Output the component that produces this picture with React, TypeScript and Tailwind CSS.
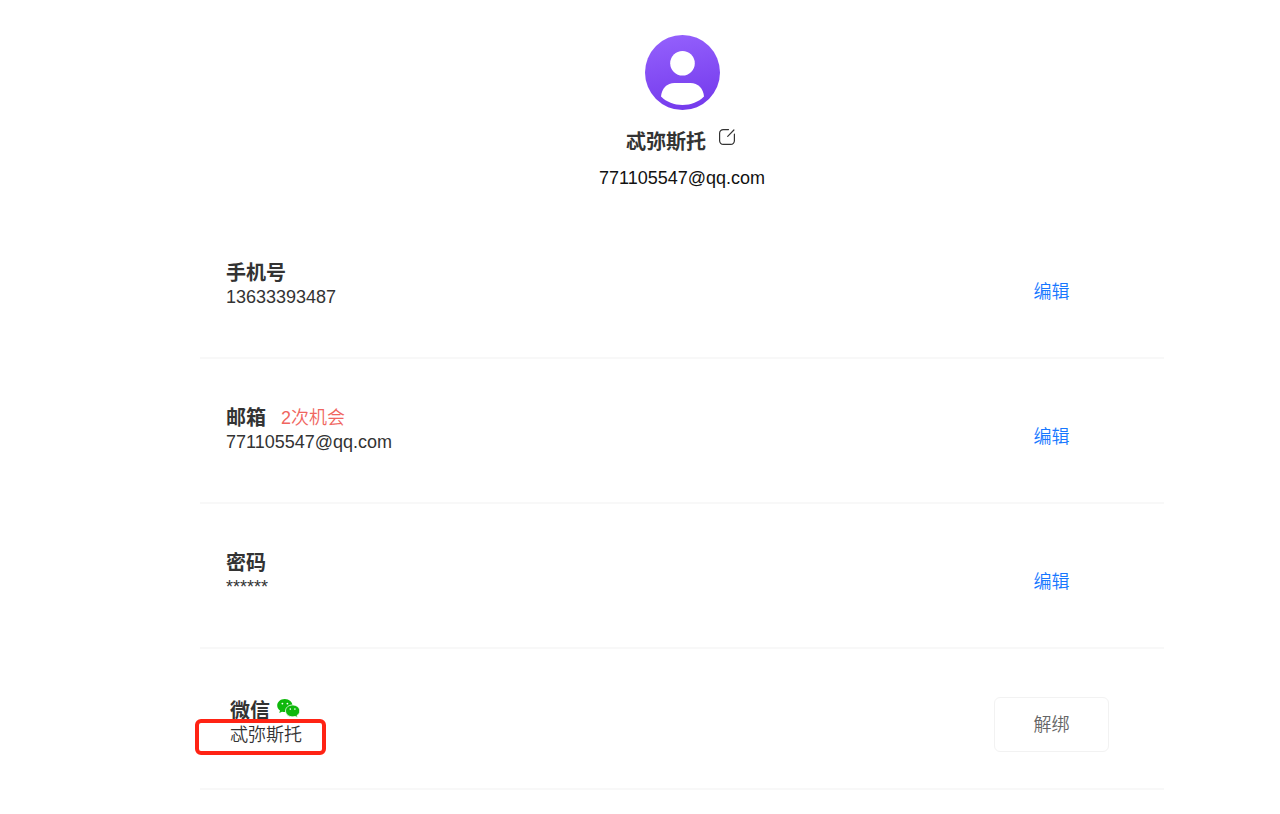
import type { ReactNode } from "react";

const accounts = [
  { label: "手机号", value: "13633393487" },
  { label: "邮箱", value: "771105547@qq.com", note: "2次机会" },
  { label: "密码", value: "******" },
];

function Avatar() {
  return (
    <svg viewBox="0 0 75 75" className="size-[75px]" role="img" aria-label="头像">
      <defs>
        <linearGradient id="avatar-fill" x1="0.4" y1="0" x2="0.6" y2="1">
          <stop offset="0" stopColor="#935ffc" />
          <stop offset="1" stopColor="#743aec" />
        </linearGradient>
      </defs>
      <circle cx="37.5" cy="37.5" r="37.5" fill="url(#avatar-fill)" />
      <circle cx="37.5" cy="28.2" r="12.3" fill="#fff" />
      <path
        d="M29.5 48h16c7.5 0 13 5.8 13.5 13.5C53.5 67 46 70 37.5 70S21.5 67 16 61.5C16.5 53.8 22 48 29.5 48Z"
        fill="#fff"
      />
    </svg>
  );
}

function EditIcon() {
  return (
    <svg viewBox="0 0 20 20" className="size-5" fill="none" stroke="#333" strokeWidth="1.2" strokeLinecap="round">
      <path d="M10.5 2.600H5.200A3.600 3.600 0 0 0 1.600 6.200v7.600a3.600 3.600 0 0 0 3.600 3.600h7.600a3.600 3.600 0 0 0 3.600-3.600V7.200" />
      <path d="M9.700 9.400 15.900 3" />
    </svg>
  );
}

function WechatIcon() {
  return (
    <svg viewBox="0 0 24 20" className="h-5 w-6">
      <path
        d="M8.800 0C4.400 0 1.200 2.900 1.200 6.600c0 2.100 1 3.800 2.800 5L3.300 14l2.700-1.300c.9.200 1.800.4 2.800.4 4.400 0 7.700-2.900 7.700-6.500S13.200 0 8.800 0Z"
        fill="#0fb80c"
      />
      <path
        d="M16.600 6c-4 0-7.100 2.600-7.100 5.900s3.100 5.900 7.100 5.900c.9 0 1.800-.2 2.600-.4l2.400 1.200-.6-2c1.600-1.100 2.700-2.700 2.700-4.700 0-3.300-3.200-5.900-7.100-5.900Z"
        fill="#0fb80c"
        stroke="#fff"
        strokeWidth="0.8"
      />
      <g fill="#fff">
        <circle cx="6.400" cy="4.600" r="0.900" />
        <circle cx="11.400" cy="4.600" r="0.900" />
        <circle cx="14.300" cy="10.100" r="0.800" />
        <circle cx="18.900" cy="10.100" r="0.800" />
      </g>
    </svg>
  );
}

function Row({ children, action }: { children: ReactNode; action: ReactNode }) {
  return (
    <li className="flex items-start justify-between border-b-2 border-[#f8f8f8] pr-[55px] pl-[26px]">
      {children}
      <div className="flex w-[115px] justify-center">{action}</div>
    </li>
  );
}

export default function App() {
  return (
    <main className="mr-[116px] ml-[200px] pt-[35px] pb-6 font-['Liberation_Sans','Noto_Sans_CJK_SC',sans-serif] text-lg leading-6 text-[#333]">
      <header className="flex flex-col items-center">
        <Avatar />
        <div className="mt-5 flex items-start gap-3">
          <h1 className="text-xl leading-6 font-bold">忒弥斯托</h1>
          <button type="button" aria-label="编辑昵称" className="-mt-[3px] cursor-pointer">
            <EditIcon />
          </button>
        </div>
        <p className="mt-3 leading-6 text-[#111]">771105547@qq.com</p>
      </header>

      <ul className="mt-6">
        {accounts.map((item) => (
          <Row
            key={item.label}
            action={
              <a href="#" aria-label={`编辑${item.label}`} className="mt-[66px] font-[350] text-[#1677ff]">
                编辑
              </a>
            }
          >
            <div className="pt-[47px] pb-12">
              <div className="flex items-center gap-[15px]">
                <h2 className="text-xl leading-6 font-bold">{item.label}</h2>
                {item.note && <span className="leading-6 font-[350] text-[#f0665f]">{item.note}</span>}
              </div>
              <p className="leading-6">{item.value}</p>
            </div>
          </Row>
        ))}
        <Row
          action={
            <button
              type="button"
              className="mt-12 h-[55px] w-full cursor-pointer rounded-md border border-[#f2f2f2] font-[350] text-[#666]"
            >
              解绑
            </button>
          }
        >
          <div className="pt-[50px] pb-[41px] pl-1">
            <div className="flex items-start gap-1.5">
              <h2 className="text-xl leading-6 font-bold">微信</h2>
              <WechatIcon />
            </div>
            <div className="relative">
              <p className="leading-6 font-[350]">忒弥斯托</p>
              <div className="pointer-events-none absolute -top-1 -left-[35px] h-9 w-[131px] rounded-md border-4 border-[#ff2314]" />
            </div>
          </div>
        </Row>
      </ul>
    </main>
  );
}
